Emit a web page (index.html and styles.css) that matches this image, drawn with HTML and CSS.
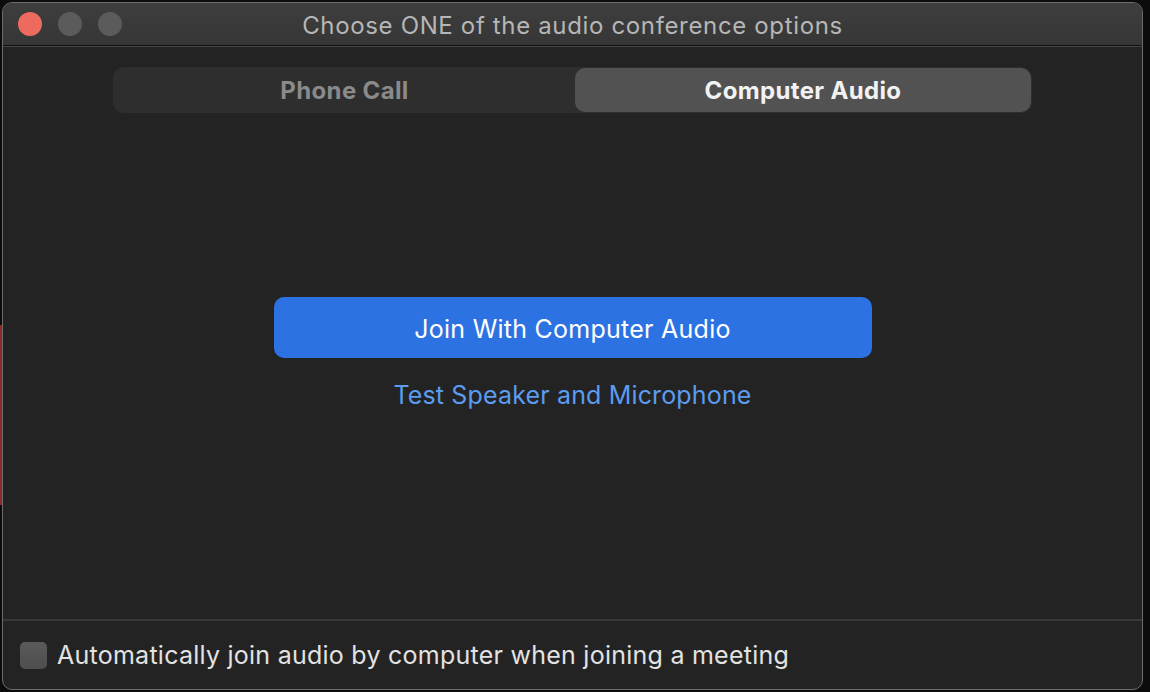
FILE: index.html
```html
<!DOCTYPE html>
<html>
<head>
<meta charset="utf-8">
<link rel="stylesheet" href="styles.css">
</head>
<body>
<div class="window">
  <div class="titlebar">
    <div class="lights">
      <span class="light red"></span>
      <span class="light grey"></span>
      <span class="light grey"></span>
    </div>
    <div class="title">Choose ONE of the audio conference options</div>
    <div></div>
  </div>
  <div class="content">
    <div class="segmented">
      <div class="seg">Phone Call</div>
      <div class="seg active">Computer Audio</div>
    </div>
    <div class="actions">
      <button class="join">Join With Computer Audio</button>
      <a class="test">Test Speaker and Microphone</a>
    </div>
  </div>
  <div class="footer">
    <span class="checkbox"></span>
    <span class="label">Automatically join audio by computer when joining a meeting</span>
  </div>
</div>
</body>
</html>
```
FILE: styles.css
```css
html, body {
  margin: 0;
  padding: 0;
  height: 100%;
}
body {
  background:
    linear-gradient(#8c2b2b, #8c2b2b) 0 325px / 2px 180px no-repeat,
    #0c0c0c;
  font-family: Inter, "Noto Sans", "Liberation Sans", sans-serif;
  overflow: hidden;
}
.window {
  margin: 2px 0 0 2px;
  width: 1141px;
  height: 688px;
  box-sizing: border-box;
  border: 1px solid #6c6c6c;
  border-radius: 10px;
  overflow: hidden;
  background: #232323;
  display: flex;
  flex-direction: column;
}
.titlebar {
  height: 42px;
  flex: none;
  background: linear-gradient(#3e3e3e, #363636);
  border-bottom: 1px solid #101010;
  display: grid;
  grid-template-columns: 1fr auto 1fr;
  align-items: center;
}
.lights {
  display: flex;
  gap: 16px;
  padding-left: 15px;
}
.light {
  width: 24px;
  height: 24px;
  border-radius: 50%;
  background: #5b5b5b;
}
.light.red {
  background: #ed6a5e;
}
.title {
  color: #b6b6b6;
  font-size: 24px;
  letter-spacing: 0.65px;
  padding-top: 3px;
}
.content {
  flex: 1;
  border-top: 1px solid #454545;
  display: flex;
  flex-direction: column;
  align-items: center;
}
.segmented {
  margin-top: 20px;
  width: 919px;
  height: 46px;
  box-sizing: border-box;
  background: #2e2e2e;
  border-radius: 11px;
  padding: 1px;
  display: grid;
  grid-template-columns: 461px 1fr;
}
.seg {
  display: flex;
  align-items: center;
  justify-content: center;
  font-size: 24px;
  font-weight: 700;
  letter-spacing: 0.35px;
  color: #8a8a8a;
  border-radius: 10px;
  padding-top: 1px;
}
.seg.active {
  background: #525252;
  color: #f2f2f2;
}
.actions {
  margin-top: 184px;
  display: flex;
  flex-direction: column;
  align-items: center;
}
.join {
  width: 598px;
  height: 61px;
  border: none;
  border-radius: 10px;
  background: #2d72e2;
  color: #ffffff;
  font-family: inherit;
  font-size: 25px;
  letter-spacing: 0.25px;
  padding: 2px 0 0;
}
.test {
  margin-top: 22px;
  color: #5b9cf0;
  font-size: 25px;
  letter-spacing: 0.15px;
  line-height: 30px;
}
.footer {
  height: 68px;
  flex: none;
  border-top: 2px solid #383838;
  display: flex;
  align-items: center;
  padding-left: 17px;
  gap: 10px;
}
.checkbox {
  width: 27px;
  height: 27px;
  border-radius: 5px;
  background: linear-gradient(#5a5a5a, #4e4e4e);
}
.label {
  color: #e2e2e2;
  font-size: 25px;
  letter-spacing: 0.25px;
}
```
